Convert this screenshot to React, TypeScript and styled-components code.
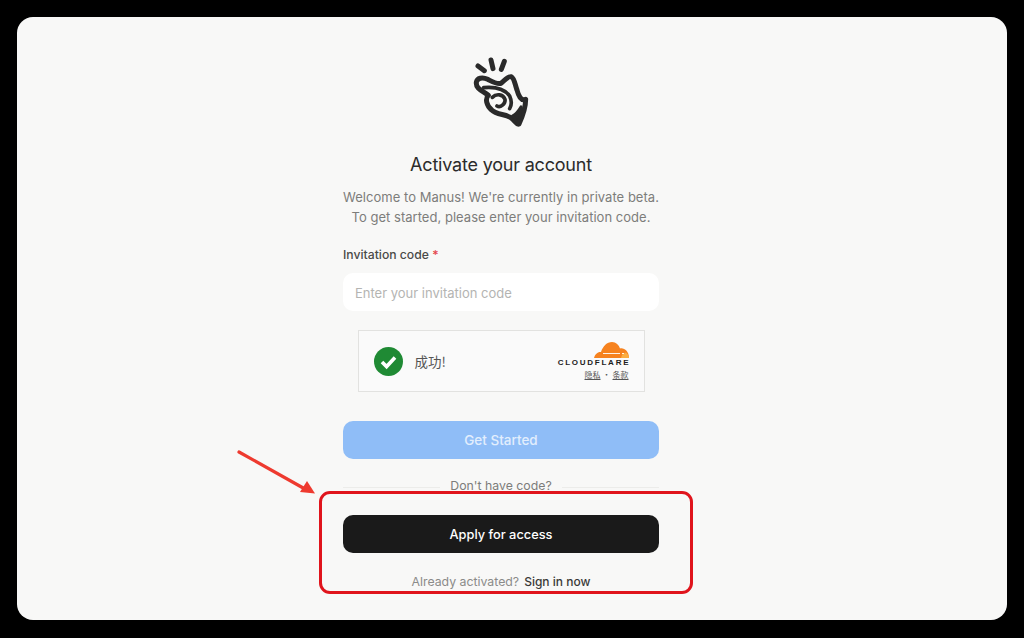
import React from 'react';
import styled, {createGlobalStyle} from 'styled-components';

const Global = createGlobalStyle`
  html, body {
    margin: 0;
    background: #000;
    font-family: Inter, "Liberation Sans", sans-serif;
  }
  * { box-sizing: border-box; }
`

const Screen = styled.div`
  width: 1024px;
  height: 638px;
  padding: 17px;
  overflow: hidden;
  background: #000;
`

const Window = styled.main`
  position: relative;
  height: 603px;
  padding: 38px 22px 0 0;
  display: flex;
  flex-direction: column;
  align-items: center;
  border-radius: 16px;
  background: #f8f8f7;
`

const Logo = styled.svg`
  display: block;
  width: 120px;
  height: 100px;
  margin-top: -15px;
`

const Column = styled.div`
  width: 316px;
  display: flex;
  flex-direction: column;
`

const Title = styled.h1`
  margin: 12px 0 0;
  font-size: 18px;
  line-height: 26px;
  font-weight: 400;
  letter-spacing: -0.2px;
  color: #2b2b2b;
  text-align: center;
`

const Intro = styled.p`
  margin: 9px 0 0;
  font-size: 13px;
  line-height: 20px;
  letter-spacing: 0.03px;
  color: #7d7d7b;
  text-align: center;
  white-space: nowrap;
`

const Label = styled.label`
  margin-top: 18px;
  font-size: 12.2px;
  line-height: 20px;
  font-weight: 500;
  color: #4a4a48;
`

const Required = styled.span`
  color: #e5484d;
`

const Input = styled.input`
  width: 100%;
  height: 38px;
  margin-top: 8px;
  padding: 1px 12px 0;
  border: none;
  outline: none;
  border-radius: 10px;
  background: #fff;
  font: 400 13px Inter, "Liberation Sans", sans-serif;
  &::placeholder { color: #b4b4b2; opacity: 1; }
`

const Captcha = styled.div`
  width: 287px;
  height: 62px;
  margin: 19px auto 0;
  padding: 0 15px 0 15px;
  display: flex;
  align-items: center;
  border: 1px solid #e2e2e0;
  background: #fafafa;
`

const CaptchaText = styled.span`
  margin-left: 12px;
  flex: 1;
  font-family: "Noto Sans CJK SC", sans-serif;
  font-size: 13.5px;
  color: #555;
`

const Brand = styled.div`
  display: flex;
  flex-direction: column;
  align-items: flex-end;
`

const BrandName = styled.span`
  font-family: "Liberation Sans", sans-serif;
  font-size: 8px;
  line-height: 9px;
  font-weight: 700;
  letter-spacing: 1.75px;
  margin-right: -1.75px;
  color: #1d1d1d;
`

const BrandLinks = styled.span`
  margin-top: 3px;
  display: flex;
  gap: 2px;
  font-family: "Noto Sans CJK SC", sans-serif;
  font-size: 8px;
  line-height: 10px;
  color: #555;
  u { text-underline-offset: 1px; }
`

const Button = styled.button<{$dark?: boolean}>`
  width: 100%;
  height: 38px;
  border: none;
  border-radius: 10px;
  font: 500 ${p => p.$dark ? '12.8px' : '13.5px'} Inter, "Liberation Sans", sans-serif;
  color: ${p => p.$dark ? '#fff' : '#e2eefd'};
  background: ${p => p.$dark ? '#1a1a1a' : '#8fbdf7'};
`

const StartButton = styled(Button)`
  margin-top: 29px;
`

const Divider = styled.div`
  margin-top: 17px;
  height: 18px;
  display: flex;
  align-items: center;
  gap: 10px;
  font-size: 12.3px;
  color: #7d7d7b;
  &::before, &::after {
    content: "";
    flex: 1;
    height: 1px;
    margin-top: 4px;
    background: #ececea;
  }
`

const ApplyButton = styled(Button)`
  margin-top: 21px;
`

const Footer = styled.p`
  margin: 20px 0 0;
  font-size: 12.3px;
  line-height: 18px;
  color: #8b8b89;
  text-align: center;
`

const SignIn = styled.a`
  margin-left: 5px;
  font-size: 12px;
  font-weight: 500;
  color: #3a3a38;
`

const Highlight = styled.div`
  position: absolute;
  left: 302px;
  top: 474px;
  width: 374px;
  height: 103px;
  border: 3px solid #e0141c;
  border-radius: 11px;
  pointer-events: none;
`

const Arrow = styled.svg`
  position: absolute;
  left: 218px;
  top: 432px;
  width: 84px;
  height: 50px;
`

const App = () => (
    <Screen>
        <Global/>
        <Window>
            <Logo viewBox="0 0 360 300" fill="none" stroke="#2a2a2a" strokeLinecap="round" strokeLinejoin="round">
                <path d="M111 78L130 92M150 60L156 86M190 64L181 88" strokeWidth="15"/>
                <path d="M106 127C108 114 124 110 140 118C154 125 168 134 180 130C190 122 200 108 211 110C220 114 222 134 228 150C232 166 240 184 254 178C254 198 246 226 234 252C226 256 222 240 208 232C190 222 166 224 152 210C136 196 132 176 142 166C124 152 104 146 106 127Z" strokeWidth="15"/>
                <path d="M128 143C160 140 190 146 206 168C214 186 212 196 206 206M154 172C166 160 186 162 192 178C194 192 178 204 168 198" strokeWidth="11"/>
                <path d="M240 200C240 218 236 236 232 250C226 242 222 234 214 228C226 222 234 210 240 200Z" fill="#2a2a2a" strokeWidth="8"/>
            </Logo>
            <Column>
                <Title>Activate your account</Title>
                <Intro>
                    Welcome to Manus! We're currently in private beta.<br/>
                    To get started, please enter your invitation code.
                </Intro>
                <Label>Invitation code <Required>*</Required></Label>
                <Input placeholder="Enter your invitation code"/>
                <Captcha>
                    <svg width="29" height="29" viewBox="0 0 29 29">
                        <circle cx="14.5" cy="14.5" r="14.5" fill="#1f8a34"/>
                        <path d="M8 15l4.600 4.600L21 10.600" fill="none" stroke="#fff" strokeWidth="3.600"/>
                    </svg>
                    <CaptchaText>成功!</CaptchaText>
                    <Brand>
                        <svg width="35" height="16" viewBox="0 0 35 16">
                            <path d="M0 16C1 12 4 9.500 7 10C9 4 13 0 18 0C22 0 25 3 26 6.500C30 5.500 35 9 35 16Z" fill="#f6821f"/>
                            <path d="M27 16C27.500 13 29 11 32 10.500C34 12 35 14 35 16Z" fill="#fbad41"/>
                            <path d="M9 11.500H26M28 11.500H30" stroke="#fff" strokeWidth="0.900"/>
                        </svg>
                        <BrandName>CLOUDFLARE</BrandName>
                        <BrandLinks><u>隐私</u>·<u>条款</u></BrandLinks>
                    </Brand>
                </Captcha>
                <StartButton>Get Started</StartButton>
                <Divider>Don't have code?</Divider>
                <ApplyButton $dark>Apply for access</ApplyButton>
                <Footer>Already activated?<SignIn>Sign in now</SignIn></Footer>
            </Column>
            <Highlight/>
            <Arrow viewBox="0 0 84 50">
                <path d="M4 3L70 40" stroke="#ee3a2f" strokeWidth="3.200" strokeLinecap="round"/>
                <path d="M80 44.500L65 43L72 32Z" fill="#ee3a2f"/>
            </Arrow>
        </Window>
    </Screen>
)

export default App;
